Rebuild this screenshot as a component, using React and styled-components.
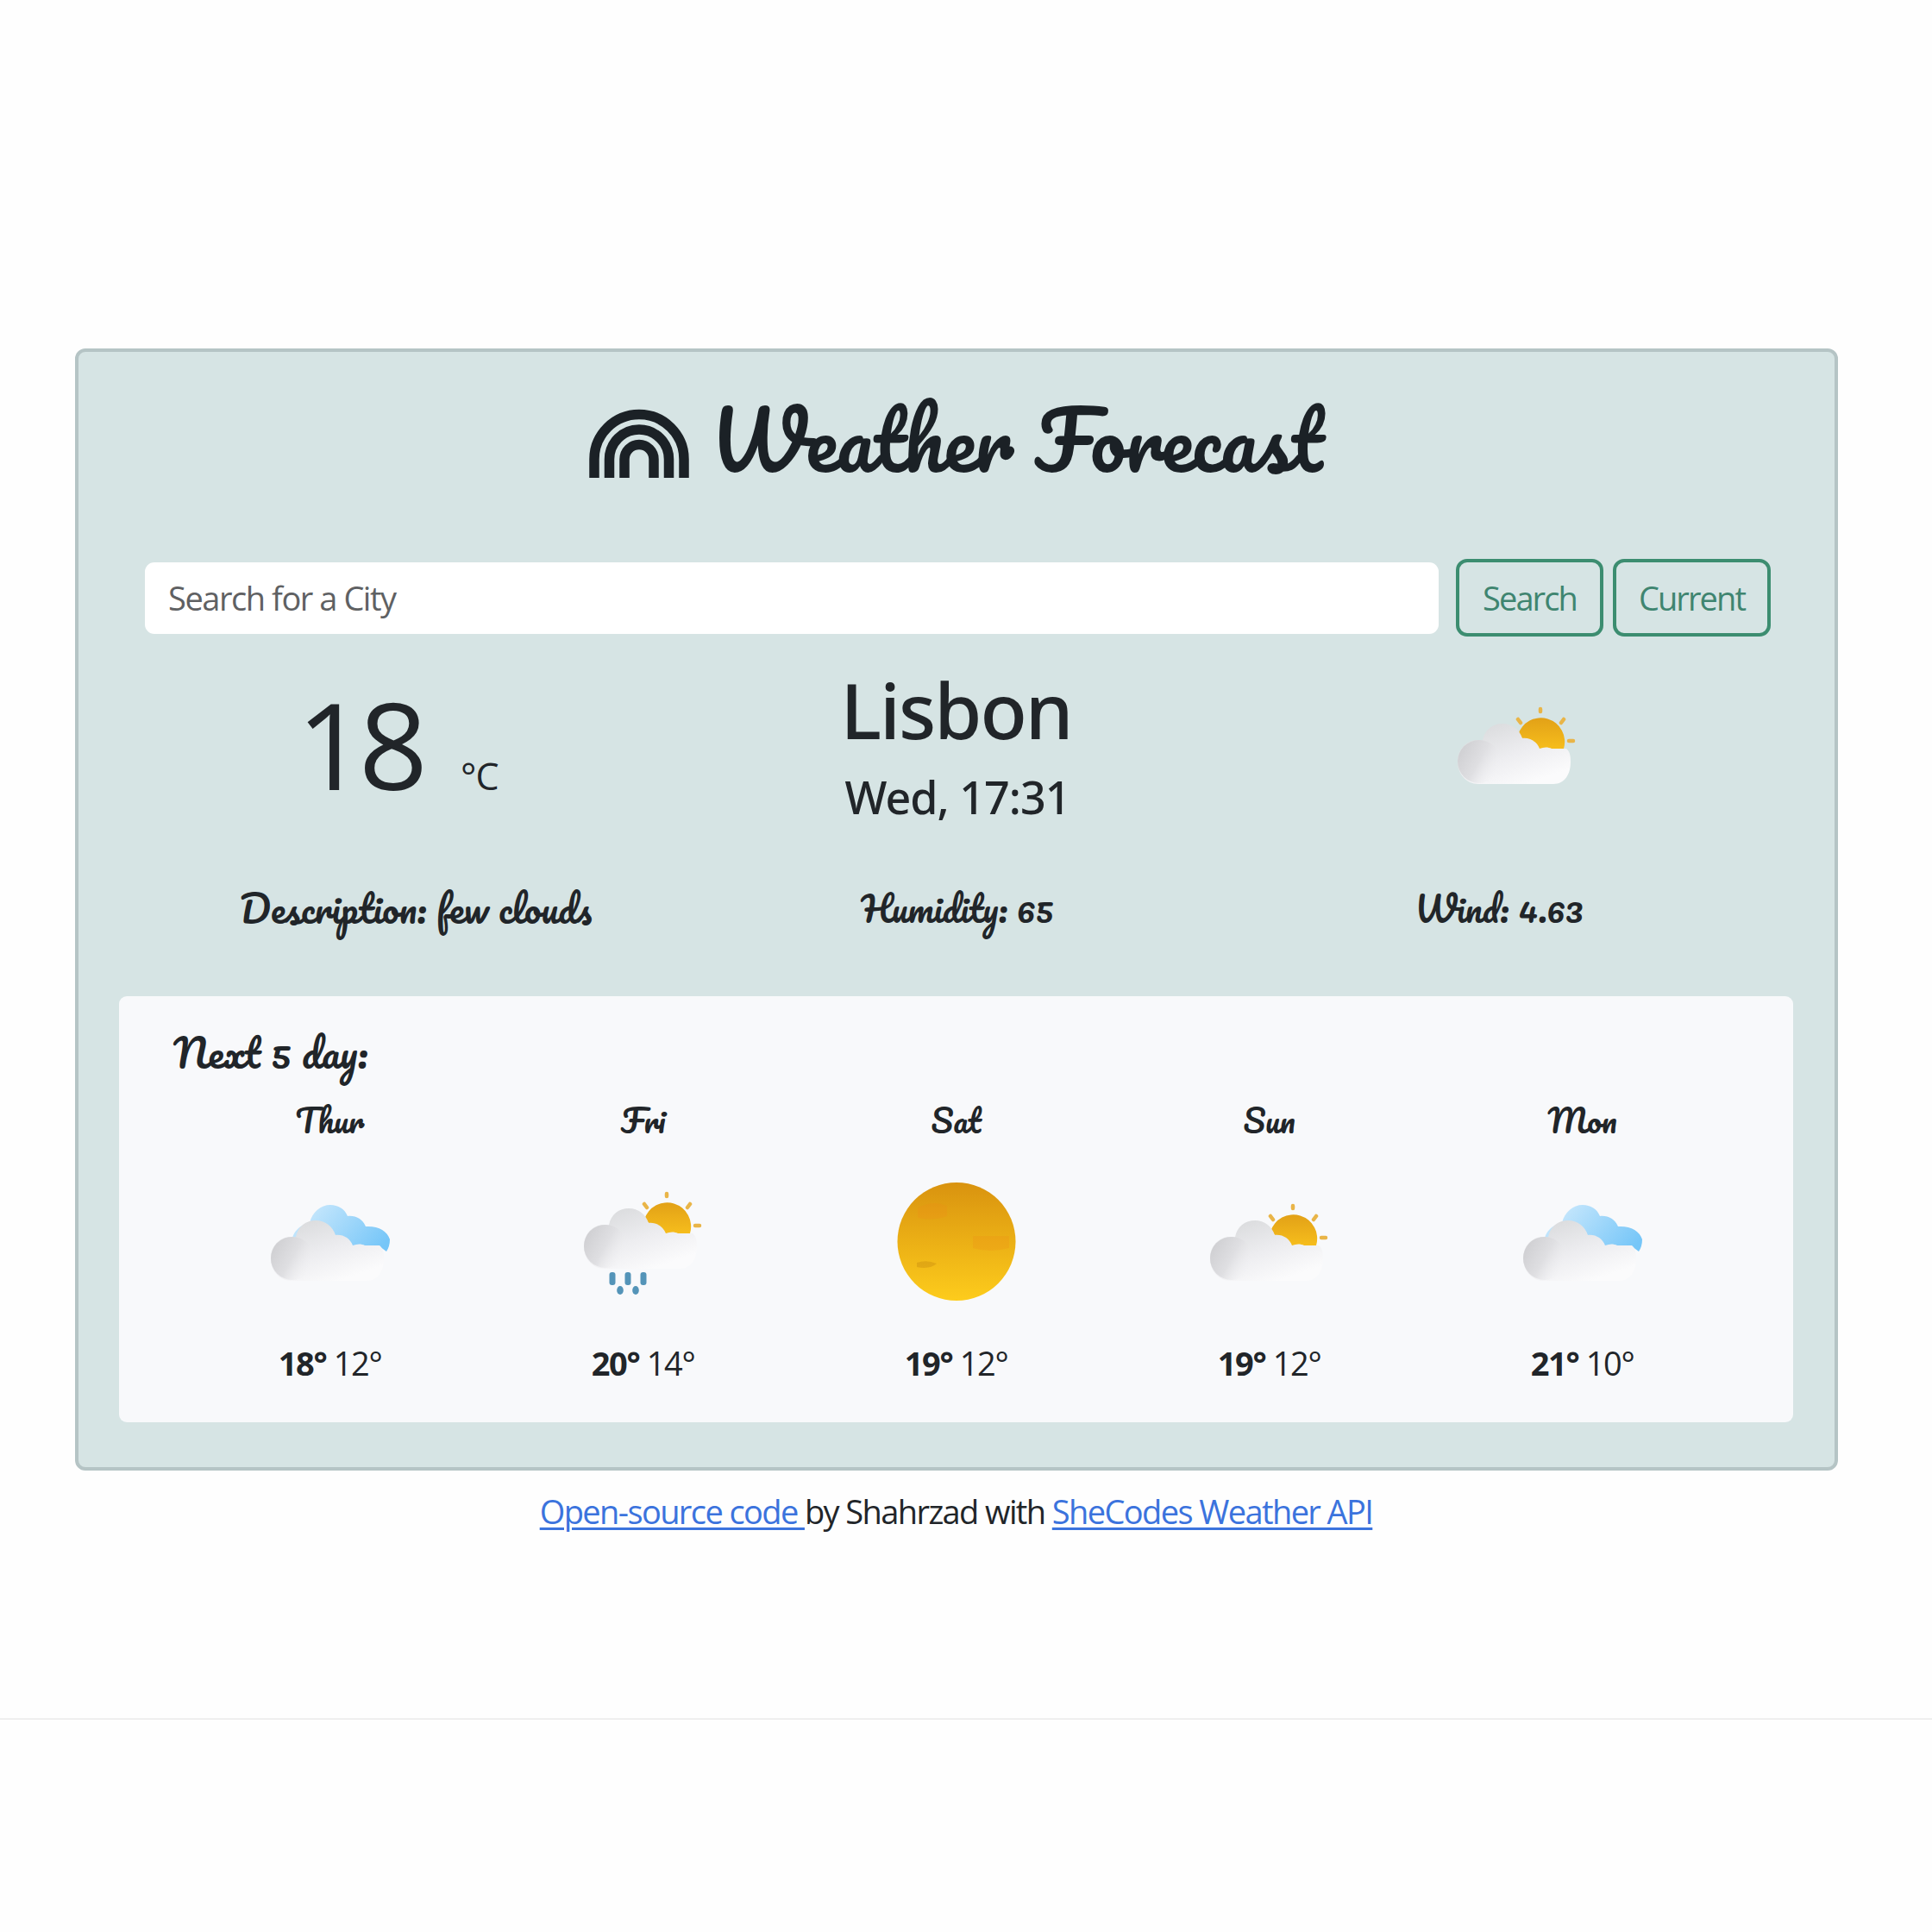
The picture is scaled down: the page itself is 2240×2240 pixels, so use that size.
import React, { useId } from "react";
import styled, { createGlobalStyle } from "styled-components";

const GlobalStyle = createGlobalStyle`
  * { box-sizing: border-box; }
  body {
    margin: 0;
    background: #fefefe;
    color: #212529;
    font-family: "Open Sans", "Noto Sans", sans-serif;
    font-size: 38px;
  }
`;

const scriptFont = `Pacifico, Lato, cursive`;

const Page = styled.div`
  padding-top: 404px;
`;

const Card = styled.main`
  width: 2044px;
  height: 1301px;
  margin-left: 87px;
  padding-top: 31px;
  background: #d6e4e4;
  border: 4px solid #b5c4c5;
  border-radius: 12px;
`;

const Title = styled.h1`
  display: flex;
  align-items: center;
  height: 140px;
  margin: 0 0 69px;
  padding-left: 591px;
  gap: 23px;
  color: #1b2126;
  font: 400 91.3px/140px ${scriptFont};
  white-space: nowrap;
`;

const RainbowIcon = styled.svg`
  flex: none;
  width: 118px;
  height: 81px;
  margin-top: 10px;
`;

const SearchForm = styled.form`
  display: flex;
  align-items: center;
  height: 90px;
  padding-left: 77px;
`;

const SearchInput = styled.input`
  width: 1500px;
  height: 83px;
  margin-right: 20px;
  padding: 0 27px;
  border: 0;
  border-radius: 11px;
  background: #fff;
  font: 400 38px/56px "Open Sans", sans-serif;
  letter-spacing: -1.45px;
  &::placeholder {
    color: #5f6163;
    opacity: 1;
  }
`;

const Button = styled.button`
  width: ${(p) => p.$width}px;
  height: 90px;
  margin-right: 11px;
  padding: 0;
  border: 4px solid #3c8d70;
  border-radius: 13px;
  background: transparent;
  color: #3f8570;
  font: 400 38px/56px "Open Sans", sans-serif;
  letter-spacing: -1.9px;
`;

const Columns = styled.section`
  display: grid;
  grid-template-columns: repeat(3, 628px);
  height: ${(p) => p.$height}px;
  margin-top: ${(p) => p.$top}px;
  padding-left: 77px;
`;

const Temperature = styled.div`
  display: flex;
  align-items: baseline;
  height: 160px;
  margin-top: 14px;
  padding-left: 176px;
  line-height: 160px;
`;

const Degrees = styled.span`
  font-size: 140px;
  letter-spacing: -8px;
`;

const Unit = styled.span`
  margin-left: 46px;
  font-size: 43px;
  letter-spacing: -1px;
`;

const Place = styled.div`
  text-align: center;
  font-family: "Noto Sans", sans-serif;
  font-weight: 500;
`;

const City = styled.div`
  font-size: 89px;
  line-height: 110px;
  letter-spacing: -2px;
  padding-right: 3px;
`;

const Time = styled.div`
  margin-top: 15px;
  font-size: 52px;
  line-height: 62px;
  letter-spacing: -1px;
`;

const CurrentIcon = styled.div`
  padding: 27px 0 0 266px;
`;

const Detail = styled.div`
  font: 400 ${(p) => p.$size}px/60px ${scriptFont};
  text-align: center;
`;

const Panel = styled.section`
  width: 1941px;
  height: 494px;
  margin: 72px 0 0 47px;
  padding: 35px 0 0 63px;
  border-radius: 9px;
  background: #f8f9fb;
`;

const PanelTitle = styled.h2`
  margin: 0 0 24px;
  font: 400 45.5px/60px ${scriptFont};
`;

const Days = styled.div`
  display: grid;
  grid-template-columns: repeat(5, 363px);
`;

const Day = styled.div`
  display: flex;
  flex-direction: column;
  align-items: center;
`;

const DayName = styled.div`
  margin-bottom: 47px;
  font: 400 37px/50px ${scriptFont};
`;

const Range = styled.div`
  margin-top: 44px;
  line-height: 56px;
  letter-spacing: -1.4px;
`;

const WeatherSvg = styled.svg`
  display: block;
  width: 138px;
  height: 137px;
  overflow: visible;
`;

const Footer = styled.footer`
  width: 2217px;
  margin-top: 19px;
  line-height: 56px;
  letter-spacing: -1.6px;
  text-align: center;
  white-space: pre;
`;

const Link = styled.a`
  color: #3b73dd;
  text-decoration: underline;
  text-decoration-thickness: 3px;
  text-underline-offset: 4px;
`;

const Divider = styled.hr`
  height: 2px;
  margin: 212px 0 0;
  border: 0;
  background: #efefef;
`;

function Rainbow() {
  return (
    <RainbowIcon viewBox="0 0 118 81" fill="none" stroke="#1b2126" strokeWidth="11.5">
      <path d="M7 80V58.500a52 52 0 0 1 104 0V80" />
      <path d="M24.500 80V58.500a34.500 34.500 0 0 1 69 0V80" />
      <path d="M42 80V58.500a17 17 0 0 1 34 0V80" />
    </RainbowIcon>
  );
}

function CloudGradients({ id }) {
  return (
    <defs>
      <linearGradient id={`${id}sun`} x1="0" y1="0" x2="0" y2="1">
        <stop offset="0" stopColor="#e2a117" />
        <stop offset="1" stopColor="#f6bd1c" />
      </linearGradient>
      <linearGradient id={`${id}body`} gradientUnits="userSpaceOnUse" x1="55" y1="42" x2="80" y2="114">
        <stop offset="0" stopColor="#dcdddf" />
        <stop offset="0.5" stopColor="#ededf0" />
        <stop offset="1" stopColor="#fbfbfc" />
      </linearGradient>
      <linearGradient id={`${id}puff`} gradientUnits="userSpaceOnUse" x1="2" y1="74" x2="48" y2="100">
        <stop offset="0" stopColor="#cfcfd2" />
        <stop offset="0.5" stopColor="#dfdfe2" />
        <stop offset="1" stopColor="#f4f4f6" stopOpacity="0" />
      </linearGradient>
      <linearGradient id={`${id}blue`} gradientUnits="userSpaceOnUse" x1="60" y1="26" x2="125" y2="80">
        <stop offset="0" stopColor="#bfe4fc" />
        <stop offset="1" stopColor="#76c6f8" />
      </linearGradient>
    </defs>
  );
}

function Cloud({ id }) {
  return (
    <g>
      <path
        fill={`url(#${id}body)`}
        d="M24 114C10 114 0 102 0 88S10 63 24 63l5 .5C31 51 41 44 52 44c11 0 20 7 23 17 9-1 17 4 20 12 5-2 10-2 14 0h17c4 3 5 8 5 15 0 15-7 26-20 26Z"
      />
      <circle cx="25" cy="88" r="25" fill={`url(#${id}puff)`} />
    </g>
  );
}

function Sun({ id }) {
  return (
    <g>
      <path
        fill="none"
        stroke="#e9b548"
        strokeWidth="4.500"
        strokeLinecap="round"
        d="M96 27v3M70 39l3 4M123 39l-3 4M129 64h5"
      />
      <path fill={`url(#${id}sun)`} d="M70 57a27 27 0 0 1 53 16H92Z" />
    </g>
  );
}

function WeatherIcon({ kind }) {
  const id = useId().replace(/[^a-zA-Z0-9]/g, "");
  return (
    <WeatherSvg viewBox="0 0 138 137">
      <CloudGradients id={id} />
      {kind === "clear" && (
        <g>
          <defs>
            <linearGradient id={`${id}disc`} x1="0" y1="0" x2="0" y2="1">
              <stop offset="0" stopColor="#d9930f" />
              <stop offset="1" stopColor="#fdcc1c" />
            </linearGradient>
          </defs>
          <circle cx="69" cy="68.500" r="68.500" fill={`url(#${id}disc)`} />
          <g fill="#f08c18" opacity="0.24">
            <path d="M24 30q16-10 34-3v12q-16 6-34 2Z" />
            <path d="M88 62h42v14q-22 6-42 0Z" />
          </g>
          <path d="M23 93q11-4 23 1-8 7-23 4Z" fill="#c98d10" opacity="0.4" />
        </g>
      )}
      {kind === "few" && (
        <g>
          <Sun id={id} />
          <Cloud id={id} />
        </g>
      )}
      {kind === "rain" && (
        <g>
          <g transform="translate(0 -14)">
            <Sun id={id} />
            <Cloud id={id} />
          </g>
          <g fill="#5494b8">
            <rect x="29.500" y="104" width="7" height="15" rx="3" />
            <rect x="47.500" y="104" width="7" height="15" rx="3" />
            <rect x="65.500" y="104" width="7" height="15" rx="3" />
            <ellipse cx="42" cy="125" rx="3.800" ry="5" />
            <ellipse cx="60" cy="125" rx="3.800" ry="5" />
          </g>
        </g>
      )}
      {kind === "clouds" && (
        <g>
          <path
            fill={`url(#${id}blue)`}
            d="M24 78C22 60 32 49 45 47 48 34 58 26 69 26c9 0 17 5 20 13 9-1 17 3 21 12 14-1 25 5 28 15q0 8-4 14l-8-6L100 92Z"
          />
          <Cloud id={id} />
        </g>
      )}
    </WeatherSvg>
  );
}

const forecast = [
  { name: "Thur", icon: "clouds", max: 18, min: 12 },
  { name: "Fri", icon: "rain", max: 20, min: 14 },
  { name: "Sat", icon: "clear", max: 19, min: 12 },
  { name: "Sun", icon: "few", max: 19, min: 12 },
  { name: "Mon", icon: "clouds", max: 21, min: 10 },
];

export default function App() {
  return (
    <Page>
      <GlobalStyle />
      <Card>
        <Title>
          <Rainbow />
          Weather Forecast
        </Title>
        <SearchForm>
          <SearchInput placeholder="Search for a City" />
          <Button type="button" $width={171}>Search</Button>
          <Button type="button" $width={183}>Current</Button>
        </SearchForm>
        <Columns $height={255} $top={30}>
          <Temperature>
            <Degrees>18</Degrees>
            <Unit>°C</Unit>
          </Temperature>
          <Place>
            <City>Lisbon</City>
            <Time>Wed, 17:31</Time>
          </Place>
          <CurrentIcon>
            <WeatherIcon kind="few" />
          </CurrentIcon>
        </Columns>
        <Columns $height={60} $top={0}>
          <Detail $size={43}>Description: few clouds</Detail>
          <Detail $size={40.5}>Humidity: 65</Detail>
          <Detail $size={40}>Wind: 4.63</Detail>
        </Columns>
        <Panel>
          <PanelTitle>Next 5 day:</PanelTitle>
          <Days>
            {forecast.map((d) => (
              <Day key={d.name}>
                <DayName>{d.name}</DayName>
                <WeatherIcon kind={d.icon} />
                <Range>
                  <strong>{d.max}°</strong> {d.min}°
                </Range>
              </Day>
            ))}
          </Days>
        </Panel>
      </Card>
      <Footer>
        <Link>Open-source code </Link>by Shahrzad with <Link>SheCodes Weather API</Link>
      </Footer>
      <Divider />
    </Page>
  );
}
